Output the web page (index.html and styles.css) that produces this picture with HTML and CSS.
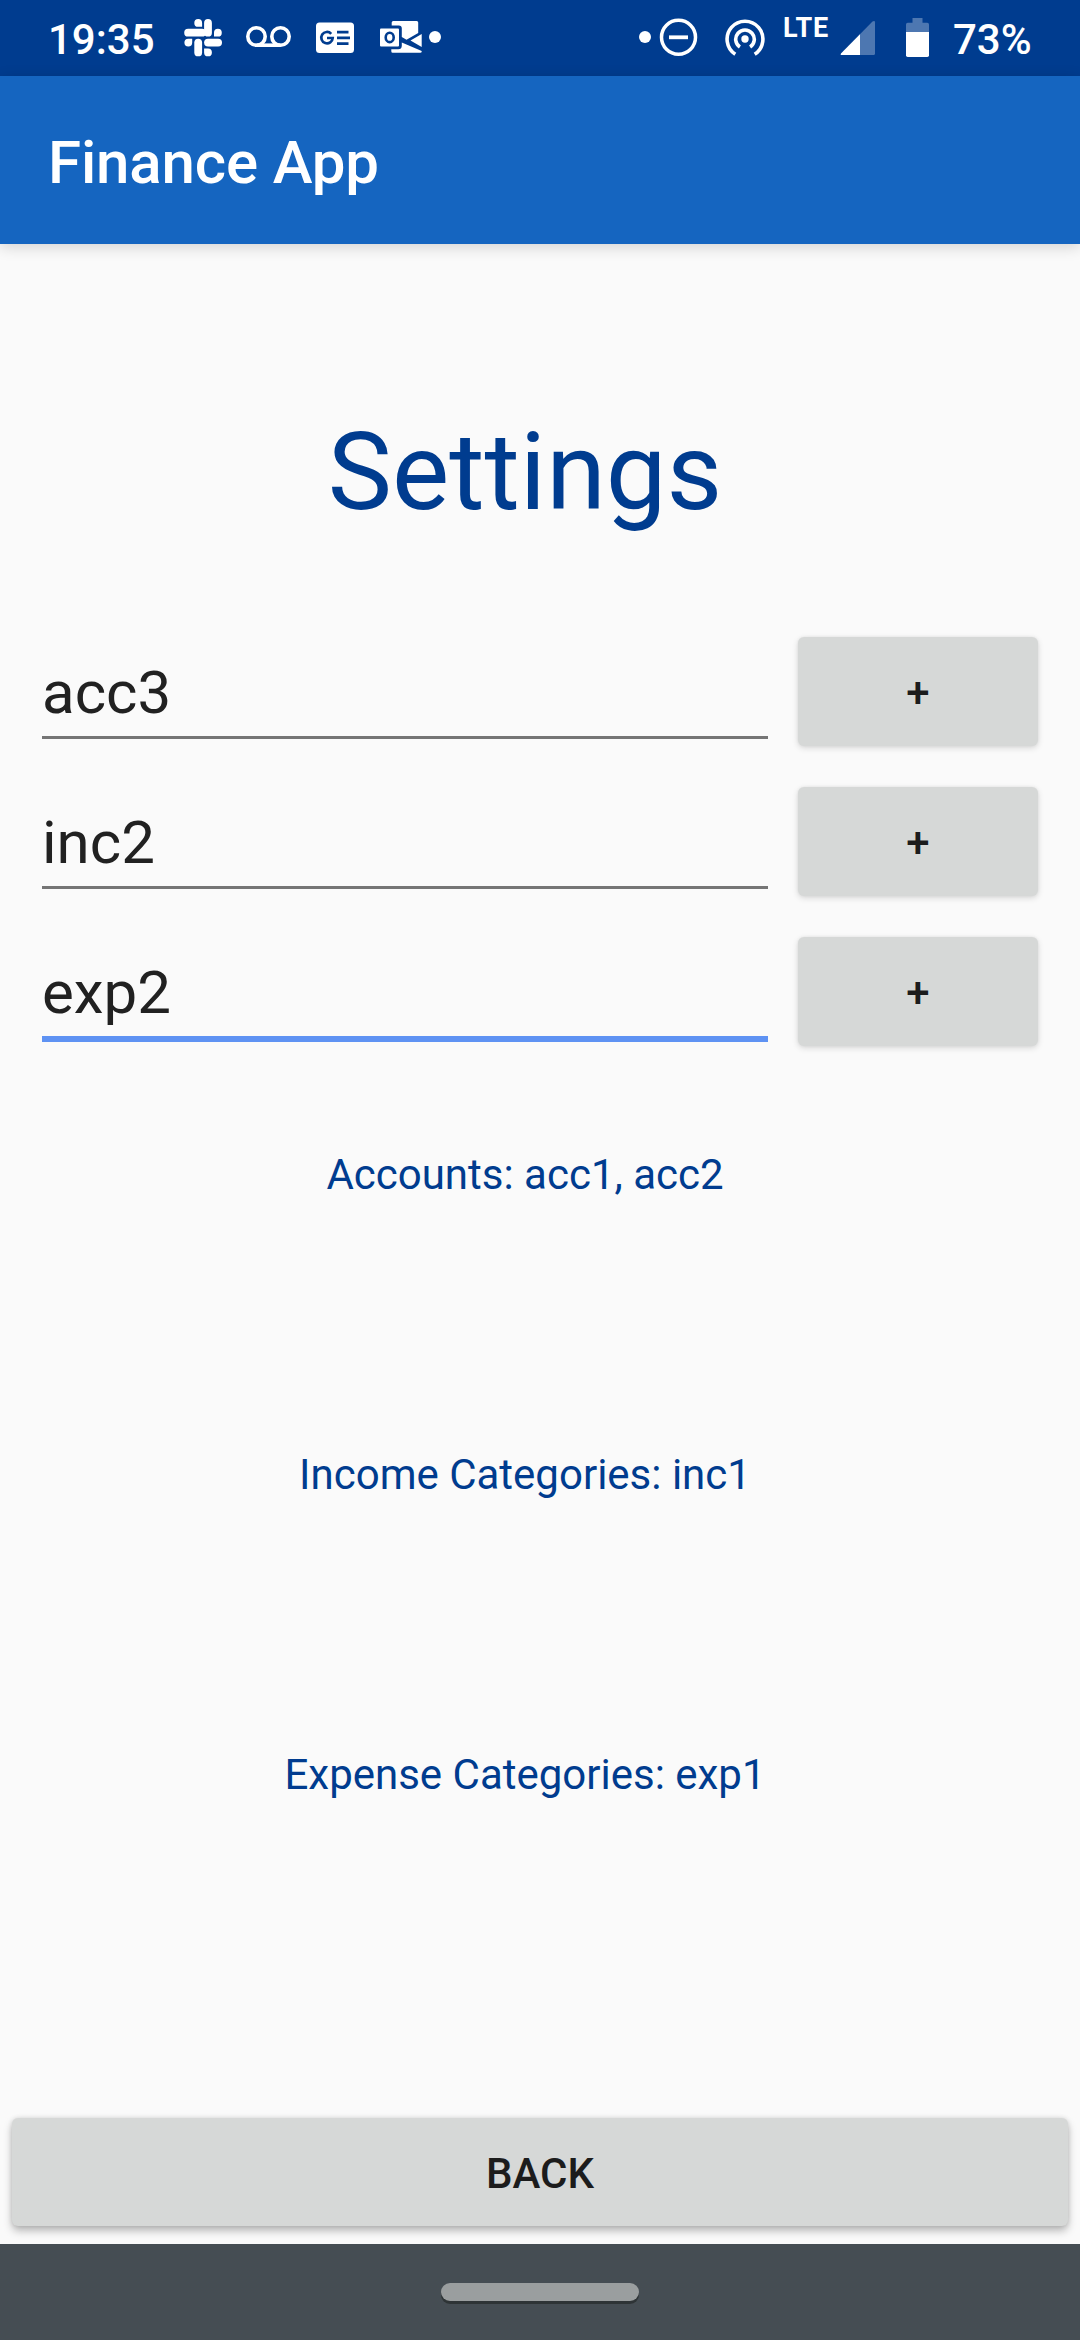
FILE: index.html
```html
<!DOCTYPE html>
<html lang="en">
<head>
<meta charset="utf-8">
<title>Finance App</title>
<link rel="stylesheet" href="styles.css">
</head>
<body>
<div class="status">
  <span class="time">19:35</span>
  <svg width="54" height="76" viewBox="180 0 54 76" fill="#fff">
    <rect x="184.200" y="28.800" width="21.700" height="7.800" rx="3.900"/>
    <rect x="204.100" y="19" width="7.800" height="17.600" rx="3.900"/>
    <rect x="194.300" y="38.700" width="7.800" height="17.600" rx="3.900"/>
    <rect x="204.100" y="38.700" width="17.900" height="7.800" rx="3.900"/>
    <path d="M202.100 26.800H198.200a3.900 3.900 0 1 1 3.900-3.900zM214 36.600V32.700a3.900 3.900 0 1 1 3.900 3.900zM204.100 48.500H208a3.900 3.900 0 1 1-3.900 3.900zM192.200 38.700V42.600a3.900 3.900 0 1 1-3.900-3.900z"/>
  </svg>
  <svg width="70" height="76" viewBox="234 0 70 76" fill="none" stroke="#fff" stroke-width="3.600">
    <circle cx="256.500" cy="36.500" r="8.700"/><circle cx="280.500" cy="36.500" r="8.700"/><path d="M256.500 45.200H280.500"/>
  </svg>
  <svg width="62" height="76" viewBox="304 0 62 76">
    <rect x="316" y="22.500" width="38" height="30.500" rx="3.500" fill="#fff"/>
    <path d="M331.200 33.800a5.700 5.700 0 1 0 1.500 4.200H327" fill="none" stroke="#003c8f" stroke-width="2.700"/>
    <path d="M337 32.200h11.500M337 37.900h13M337 43.700h11.500" stroke="#003c8f" stroke-width="2.700"/>
  </svg>
  <svg width="60" height="76" viewBox="366 0 60 76" fill="#fff">
    <path d="M391.700 25.500V22.500q0-1.500 1.500-1.500h23.500q1.500 0 1.500 1.500V33L406.500 39.700l-4.700-2.600V28.500q0-3-3-3zM410.500 40.500L421.700 34V47zM391.300 49.200h7q3.400 0 3.500-3.500v-3.200L421.700 51v.5q0 1.300-1.500 1.300h-27.500q-1.400 0-1.400-1.500z"/>
    <path d="M381 28.500h17q1 0 1 1v16q0 1-1 1h-17q-1 0-1-1v-16q0-1 1-1z"/>
    <ellipse cx="389.700" cy="37.400" rx="4" ry="4.700" fill="none" stroke="#003c8f" stroke-width="2.600"/>
  </svg>
  <svg width="18" height="76" viewBox="426 0 18 76"><circle cx="435" cy="37" r="6" fill="#fff"/></svg>
  <span class="spacer"></span>
  <svg width="18" height="76" viewBox="636 0 18 76"><circle cx="645" cy="37" r="6" fill="#fff"/></svg>
  <svg width="56" height="76" viewBox="654 0 56 76" fill="none" stroke="#fff">
    <circle cx="678.500" cy="37.300" r="17" stroke-width="3.500"/><path d="M669 37.300H688" stroke-width="3.800"/>
  </svg>
  <svg width="65" height="76" viewBox="710 0 65 76" fill="none" stroke="#fff" stroke-width="3.600">
    <circle cx="745" cy="39" r="3.700" fill="#fff" stroke="none"/>
    <path d="M739.900 47.100a9.300 9.300 0 1 1 10.200 0M735.300 54.200a17.900 17.900 0 1 1 19.400 0"/>
  </svg>
  <span class="lte">LTE</span>
  <svg width="49" height="76" viewBox="836 0 49 76">
    <path d="M841 53.500L872.500 21.500Q875 20.200 875 22.500V53.500Q875 55 873.500 55H842Q840 55 841 53.500z" fill="#4d77b1"/>
    <path d="M841 53.500L860 34.200V55H842Q840 55 841 53.500z" fill="#fff"/>
  </svg>
  <svg width="60" height="76" viewBox="885 0 60 76">
    <path d="M906 32V24.500q0-1.700 1.700-1.700H912.500V18H922.500V22.800H927.300q1.700 0 1.700 1.700V32z" fill="#4d77b1"/>
    <path d="M906 32H929V55.300q0 1.700-1.700 1.700H907.700q-1.700 0-1.700-1.700z" fill="#fff"/>
  </svg>
  <span class="percent">73%</span>
</div>
<header class="appbar">Finance App</header>
<main class="content">
  <h1 class="heading">Settings</h1>
  <div class="form">
    <div class="row"><div class="field">acc3</div><button class="btn">+</button></div>
    <div class="row"><div class="field">inc2</div><button class="btn">+</button></div>
    <div class="row"><div class="field focused">exp2</div><button class="btn">+</button></div>
  </div>
  <div class="lists">
    <p class="list">Accounts: acc1, acc2</p>
    <p class="list">Income Categories: inc1</p>
    <p class="list">Expense Categories: exp1</p>
  </div>
  <button class="btn back">BACK</button>
</main>
<nav class="navbar"><div class="pill"></div></nav>
</body>
</html>
```
FILE: styles.css
```css
* { box-sizing: border-box; }
body {
  margin: 0;
  width: 1080px;
  height: 2340px;
  display: flex;
  flex-direction: column;
  background: #fafafa;
  font-family: Roboto, "Noto Sans", sans-serif;
  overflow: hidden;
}
svg { display: block; flex: none; }
.status {
  height: 76px;
  flex: none;
  display: flex;
  background: #003c8f;
  color: #fff;
  font-size: 42px;
  font-weight: 500;
  line-height: 79px;
}
.time { width: 180px; padding-left: 48px; }
.spacer { width: 192px; }
.lte { width: 61px; padding-left: 8px; font-size: 27px; font-weight: 700; line-height: 56px; letter-spacing: 0.8px; }
.percent { padding-left: 8px; }
.appbar {
  height: 168px;
  flex: none;
  padding-left: 48px;
  background: #1565c0;
  color: #fff;
  font-size: 60px;
  font-weight: 500;
  line-height: 173px;
  letter-spacing: -0.15px;
  box-shadow: 0 3px 14px rgba(0, 0, 0, 0.16);
}
.content {
  height: 2000px;
  flex: none;
  display: flex;
  flex-direction: column;
}
.heading {
  margin: 158px 30px 0 0;
  height: 140px;
  line-height: 140px;
  font-size: 108px;
  font-weight: 400;
  text-align: center;
  color: #003c8f;
}
.form { padding: 95px 42px 0; display: flex; flex-direction: column; gap: 41px; }
.row { display: flex; gap: 30px; height: 109px; }
.field {
  width: 726px;
  height: 102px;
  border-bottom: 3px solid #757575;
  font-size: 60px;
  line-height: 111px;
  color: #212121;
}
.field.focused { height: 105px; border-bottom: 6px solid #5e92f3; }
.btn {
  width: 240px;
  padding: 0;
  border: 0;
  border-radius: 6px;
  background: #d6d8d7;
  color: #1c1c1c;
  font: 500 42px/112px Roboto, "Noto Sans", sans-serif;
  box-shadow: 0 2px 6px rgba(0, 0, 0, 0.14), 0 0 3px rgba(0, 0, 0, 0.06);
}
.lists {
  margin: 99px 30px 0 0;
  display: flex;
  flex-direction: column;
  gap: 240px;
}
.list {
  margin: 0;
  font-size: 42px;
  line-height: 60px;
  text-align: center;
  color: #003c8f;
}
.back {
  width: 1056px;
  height: 108px;
  margin: auto 12px 18px;
  box-shadow: 0 5px 8px rgba(0, 0, 0, 0.26), 0 0 5px rgba(0, 0, 0, 0.12);
}
.navbar {
  height: 96px;
  flex: none;
  display: flex;
  justify-content: center;
  padding-top: 39px;
  background: #454d53;
}
.pill {
  width: 198px;
  height: 18px;
  border-radius: 9px;
  background: #9a9e9f;
  box-shadow: 0 3px 0 #2e3436;
}
```
